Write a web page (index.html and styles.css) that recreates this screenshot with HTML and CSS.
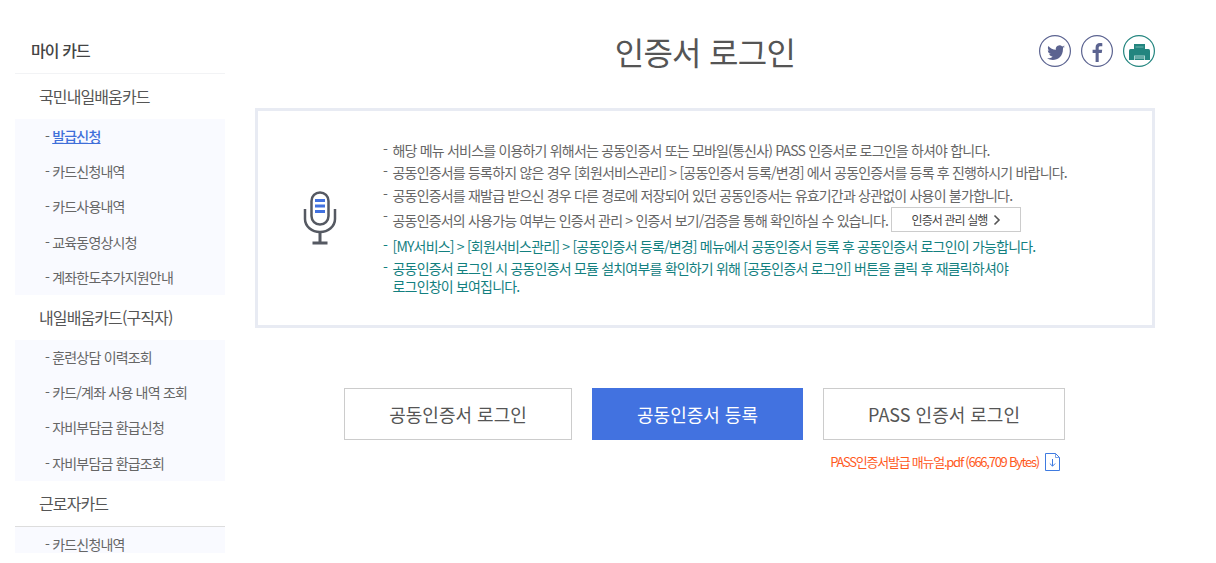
FILE: index.html
```html
<!DOCTYPE html>
<html lang="ko">
<head>
<meta charset="utf-8">
<title>인증서 로그인</title>
<link rel="stylesheet" href="styles.css">
</head>
<body>
<div class="page">
  <nav class="side">
    <h2 class="side-title">마이 카드</h2>
    <h3 class="group">국민내일배움카드</h3>
    <ul class="sub">
      <li class="on"><span class="dash">- </span><a>발급신청</a></li>
      <li>- 카드신청내역</li>
      <li>- 카드사용내역</li>
      <li>- 교육동영상시청</li>
      <li>- 계좌한도추가지원안내</li>
    </ul>
    <h3 class="group">내일배움카드(구직자)</h3>
    <ul class="sub">
      <li>- 훈련상담 이력조회</li>
      <li>- 카드/계좌 사용 내역 조회</li>
      <li>- 자비부담금 환급신청</li>
      <li>- 자비부담금 환급조회</li>
    </ul>
    <h3 class="group group-line">근로자카드</h3>
    <ul class="sub">
      <li>- 카드신청내역</li>
    </ul>
  </nav>
  <main class="main">
    <header class="head">
      <h1 class="title">인증서 로그인</h1>
      <div class="shares">
        <span class="share">
          <svg viewBox="0 0 32 32" width="32" height="32"><circle cx="16" cy="16" r="15.4" fill="none" stroke="#5b6390" stroke-width="1.2"/><path transform="translate(1 1.500)" d="M25 10.4c-.7.3-1.4.5-2.100.6.8-.5 1.300-1.200 1.600-2-.7.4-1.500.7-2.300.9a3.700 3.700 0 0 0-6.300 3.400c-3-.2-5.700-1.600-7.500-3.900-1 1.700-.5 3.800 1.100 4.900-.6 0-1.200-.2-1.700-.5 0 1.800 1.300 3.300 3 3.700-.5.1-1.100.2-1.700.1.500 1.500 1.900 2.500 3.500 2.600-1.600 1.200-3.600 1.800-5.500 1.600 5.800 3.700 15.900 1.400 15.900-9.600 0-.2 0-.3 0-.5.700-.5 1.300-1.100 1.800-1.800z" fill="#5b6390"/></svg>
        </span>
        <span class="share">
          <svg viewBox="0 0 32 32" width="32" height="32"><circle cx="16" cy="16" r="15.400" fill="none" stroke="#5b6390" stroke-width="1.200"/><path transform="translate(0 1)" d="M17.700 26v-9h3l.5-3.300h-3.500v-1.900c0-1 .4-1.600 1.700-1.600h1.900V7.200c-.5-.1-1.400-.2-2.400-.2-2.700 0-4.300 1.600-4.300 4.400v2.300h-3V17h3v9z" fill="#5b6390"/></svg>
        </span>
        <span class="share">
          <svg viewBox="0 0 32 32" width="32" height="32"><circle cx="16" cy="16" r="15.400" fill="none" stroke="#23857f" stroke-width="1.200"/><path d="M11 9h11v5H11z" fill="#23857f"/><path d="M12.500 12h8" stroke="#8cc4c0" stroke-width=".8"/><path d="M7.500 14h18a1.500 1.500 0 0 1 1.500 1.500V25H6v-9.500A1.500 1.500 0 0 1 7.500 14z" fill="#23857f"/><path d="M11 20.500h11V25H11z" fill="#a9d3d0"/><path d="M12 21.500h9V25h-9z" fill="#23857f"/><path d="M12 23h9" stroke="#a9d3d0"/></svg>
        </span>
      </div>
    </header>
    <section class="notice">
      <svg class="mic" viewBox="0 0 34 54" width="34" height="54">
        <rect x="8.500" y="1.500" width="17" height="32" rx="8.500" fill="none" stroke="#555962" stroke-width="2.500"/>
        <path d="M12 9.500h10M12 15h10M12 20.500h10" stroke="#4272e0" stroke-width="3"/>
        <path d="M2 18v10a15 13 0 0 0 30 0V18" fill="none" stroke="#555962" stroke-width="2.500"/>
        <path d="M17 41v10M9.500 52h15" stroke="#555962" stroke-width="3"/>
      </svg>
      <div class="texts">
        <ul class="notes">
          <li>해당 메뉴 서비스를 이용하기 위해서는 공동인증서 또는 모바일(통신사) PASS 인증서로 로그인을 하셔야 합니다.</li>
          <li>공동인증서를 등록하지 않은 경우 [회원서비스관리] &gt; [공동인증서 등록/변경] 에서 공동인증서를 등록 후 진행하시기 바랍니다.</li>
          <li>공동인증서를 재발급 받으신 경우 다른 경로에 저장되어 있던 공동인증서는 유효기간과 상관없이 사용이 불가합니다.</li>
          <li class="with-btn">공동인증서의 사용가능 여부는 인증서 관리 &gt; 인증서 보기/검증을 통해 확인하실 수 있습니다.<a class="mini">인증서 관리 실행<svg viewBox="0 0 8 12" width="8" height="12"><path d="M1.500 1.500 6 6l-4.500 4.500" fill="none" stroke="#555" stroke-width="1.600"/></svg></a></li>
          <li class="teal">[MY서비스] &gt; [회원서비스관리] &gt; [공동인증서 등록/변경] 메뉴에서 공동인증서 등록 후 공동인증서 로그인이 가능합니다.</li>
          <li class="teal">공동인증서 로그인 시 공동인증서 모듈 설치여부를 확인하기 위해 [공동인증서 로그인] 버튼을 클릭 후 재클릭하셔야<br>로그인창이 보여집니다.</li>
        </ul>
      </div>
    </section>
    <div class="btns">
      <a class="btn b1">공동인증서 로그인</a>
      <a class="btn b2">공동인증서 등록</a>
      <a class="btn b3">PASS 인증서 로그인</a>
    </div>
    <div class="file">
      <a class="file-link">PASS인증서발급 매뉴얼.pdf (666,709 Bytes)</a>
      <svg viewBox="0 0 15 18" width="15" height="18"><path d="M.500.500h10l4 4v13H.500z" fill="none" stroke="#3f7be0"/><path d="M10.500.500v4h4" fill="none" stroke="#3f7be0" stroke-width=".7"/><path d="M7.500 6v7M4.800 10.500l2.700 2.700 2.700-2.700" fill="none" stroke="#3f7be0"/></svg>
    </div>
  </main>
</div>
</body>
</html>
```
FILE: styles.css
```css
* { box-sizing: border-box; }
html, body { margin: 0; padding: 0; background: #fff; }
body {
  font-family: "Noto Sans CJK KR", "Noto Sans", sans-serif;
  color: #555;
  height: 563px;
  overflow: hidden;
}
h1, h2, h3, ul { margin: 0; padding: 0; font-weight: 400; }
ul { list-style: none; }
.page { display: flex; align-items: flex-start; padding-left: 15px; }
.side { width: 210px; height: 553px; overflow: hidden; flex: none; }
.side-title {
  height: 74px;
  padding: 41px 0 0 16px;
  font-size: 16px;
  line-height: 18px;
  font-weight: 500;
  letter-spacing: -0.9px;
  color: #444;
  border-bottom: 1px solid #f2f3f5;
}
.group {
  height: 45px;
  padding: 11px 0 0 24px;
  font-size: 16px;
  line-height: 22px;
  letter-spacing: -0.9px;
  color: #555;
}
.group-line { border-bottom: 1px solid #ddd; height: 46px; }
.sub { background: #f9faff; }
.sub li {
  height: 35.200px;
  padding-left: 30px;
  font-size: 14px;
  line-height: 34.400px;
  letter-spacing: -0.8px;
  color: #666;
}
.on a { color: #3f6fd9; font-weight: 500; text-decoration: underline; }
.main { width: 900px; margin-left: 30px; flex: none; }
.head {
  display: grid;
  grid-template-columns: 1fr auto 1fr;
  align-items: center;
  height: 108px;
  padding-bottom: 6px;
}
.title {
  grid-column: 2;
  font-size: 32px;
  line-height: 40px;
  letter-spacing: -0.7px;
  color: #555;
  font-weight: 400;
}
.shares { grid-column: 3; justify-self: end; display: flex; gap: 10px; }
.share { display: block; width: 32px; height: 32px; }
.share svg { display: block; }
.notice {
  height: 220px;
  border: 3px solid #e8ebf3;
  display: flex;
  align-items: center;
  padding-left: 45px;
}
.mic { flex: none; }
.texts { margin-left: 46px; }
.notes li {
  position: relative;
  padding-left: 9.500px;
  font-size: 14px;
  line-height: 18px;
  margin-bottom: 4.500px;
  letter-spacing: -0.81px;
  color: #666;
}
.notes li::before { content: "-"; position: absolute; left: 0; top: -1px; }
.notes li:last-child { margin-bottom: 0; }
.notes .with-btn { display: flex; align-items: center; height: 25px; margin-top: -1px; }
.notes .with-btn::before { top: 0; }
.notes .teal { color: #13807f; }
.mini {
  display: flex;
  align-items: center;
  justify-content: center;
  gap: 5px;
  width: 130px;
  height: 25px;
  margin-left: 3px;
  border: 1px solid #ccc;
  font-size: 12px;
  letter-spacing: -0.9px;
  color: #444;
}
.btns { display: flex; justify-content: center; gap: 20px; margin-top: 60px; padding-right: 1px; }
.btn {
  height: 52px;
  display: flex;
  align-items: center;
  justify-content: center;
  font-size: 18px;
  border: 1px solid #ccc;
  color: #555;
}
.b1 { width: 228px; }
.b2 { width: 211px; background: #4272e0; border-color: #4272e0; color: #fff; }
.b3 { width: 242px; }
.file {
  display: flex;
  justify-content: flex-end;
  align-items: center;
  gap: 6px;
  margin-top: 12px;
  padding-right: 95px;
}
.file-link { font-size: 13px; letter-spacing: -1.250px; color: #ff5a1e; line-height: 20px; }
.file svg { display: block; }
```
